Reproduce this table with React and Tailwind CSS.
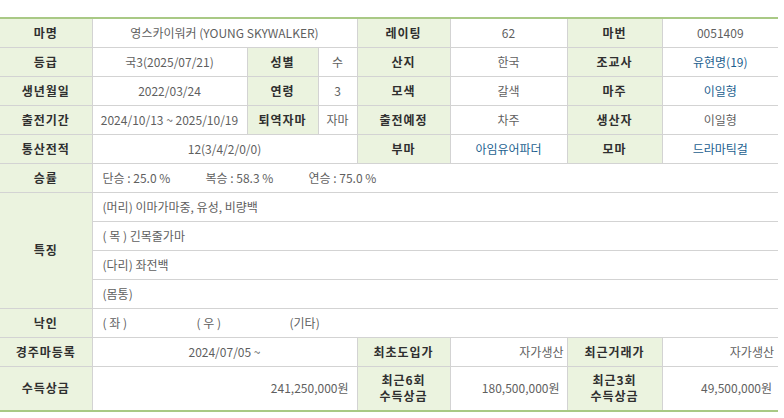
const th = 'bg-[#ebf3df] border border-[#d3d3d3] font-bold text-[#2f2f2f] text-center tracking-[1px]'
const td = 'border border-[#d3d3d3] text-[#5f5f5f] text-center'
const link = 'text-[#1d5f8f]'

function App() {
  return (
    <div className="w-[784px] h-[418px] bg-white pt-[17px]" style={{ fontFamily: '"Noto Sans CJK KR", "Noto Sans", sans-serif' }}>
      <table className="w-[778px] table-fixed border-collapse border-t-2 border-b-2 border-t-[#a9c985] border-b-[#a9c985] text-[12px] leading-[14px] [&_td]:border-l-0 [&_th]:border-l-0">
        <colgroup>
          <col className="w-[92px]" />
          <col className="w-[155px]" />
          <col className="w-[71px]" />
          <col className="w-[39px]" />
          <col className="w-[93px]" />
          <col className="w-[117px]" />
          <col className="w-[95px]" />
          <col className="w-[116px]" />
        </colgroup>
        <tbody className="[&_tr]:h-[29px]">
          <tr>
            <th className={th}>마명</th>
            <td className={td} colSpan={3}>영스카이워커 (YOUNG SKYWALKER)</td>
            <th className={th}>레이팅</th>
            <td className={td}>62</td>
            <th className={th}>마번</th>
            <td className={td + ' border-r-0'}>0051409</td>
          </tr>
          <tr>
            <th className={th}>등급</th>
            <td className={td}>국3(2025/07/21)</td>
            <th className={th}>성별</th>
            <td className={td}>수</td>
            <th className={th}>산지</th>
            <td className={td}>한국</td>
            <th className={th}>조교사</th>
            <td className={td + ' border-r-0'}><span className={link}>유현명(19)</span></td>
          </tr>
          <tr>
            <th className={th}>생년월일</th>
            <td className={td}>2022/03/24</td>
            <th className={th}>연령</th>
            <td className={td}>3</td>
            <th className={th}>모색</th>
            <td className={td}>갈색</td>
            <th className={th}>마주</th>
            <td className={td + ' border-r-0'}><span className={link}>이일형</span></td>
          </tr>
          <tr>
            <th className={th}>출전기간</th>
            <td className={td + ' whitespace-nowrap'}>2024/10/13 ~ 2025/10/19</td>
            <th className={th + ' tracking-[0px]'}>퇴역자마</th>
            <td className={td}>자마</td>
            <th className={th + ' tracking-[0px]'}>출전예정</th>
            <td className={td}>차주</td>
            <th className={th}>생산자</th>
            <td className={td + ' border-r-0'}>이일형</td>
          </tr>
          <tr>
            <th className={th}>통산전적</th>
            <td className={td} colSpan={3}>12(3/4/2/0/0)</td>
            <th className={th}>부마</th>
            <td className={td}><span className={link}>아임유어파더</span></td>
            <th className={th}>모마</th>
            <td className={td + ' border-r-0'}><span className={link}>드라마틱걸</span></td>
          </tr>
          <tr>
            <th className={th}>승률</th>
            <td className={td + ' text-left pl-[10px] border-r-0'} colSpan={7}>
              <span className="inline-block w-[103px]">단승 : 25.0 %</span>
              <span className="inline-block w-[103px]">복승 : 58.3 %</span>
              <span className="inline-block">연승 : 75.0 %</span>
            </td>
          </tr>
          <tr>
            <th className={th} rowSpan={4}>특징</th>
            <td className={td + ' text-left pl-[10px] border-r-0'} colSpan={7}>(머리) 이마가마중, 유성, 비량백</td>
          </tr>
          <tr>
            <td className={td + ' text-left pl-[10px] border-r-0'} colSpan={7}>( 목 ) 긴목줄가마</td>
          </tr>
          <tr>
            <td className={td + ' text-left pl-[10px] border-r-0'} colSpan={7}>(다리) 좌전백</td>
          </tr>
          <tr>
            <td className={td + ' text-left pl-[10px] border-r-0'} colSpan={7}>(몸통)</td>
          </tr>
          <tr>
            <th className={th}>낙인</th>
            <td className={td + ' text-left pl-[10px] border-r-0'} colSpan={7}>
              <span className="inline-block w-[94px]">( 좌 )</span>
              <span className="inline-block w-[93px]">( 우 )</span>
              <span className="inline-block">(기타)</span>
            </td>
          </tr>
          <tr>
            <th className={th + ' tracking-[0px]'}>경주마등록</th>
            <td className={td} colSpan={3}>2024/07/05 ~</td>
            <th className={th + ' tracking-[0px]'}>최초도입가</th>
            <td className={td + ' text-right pr-[3px]'}>자가생산</td>
            <th className={th + ' tracking-[0px]'}>최근거래가</th>
            <td className={td + ' text-right pr-[4px] border-r-0'}>자가생산</td>
          </tr>
          <tr className="!h-[45px]">
            <th className={th + ' leading-[16px]'}>수득상금</th>
            <td className={td + ' text-right pr-[8px]'} colSpan={3}>241,250,000원</td>
            <th className={th + ' leading-[16px]'}>최근6회<br />수득상금</th>
            <td className={td + ' text-right pr-[7px]'}>180,500,000원</td>
            <th className={th + ' leading-[16px]'}>최근3회<br />수득상금</th>
            <td className={td + ' text-right pr-[6px] border-r-0'}>49,500,000원</td>
          </tr>
        </tbody>
      </table>
    </div>
  )
}

export default App
